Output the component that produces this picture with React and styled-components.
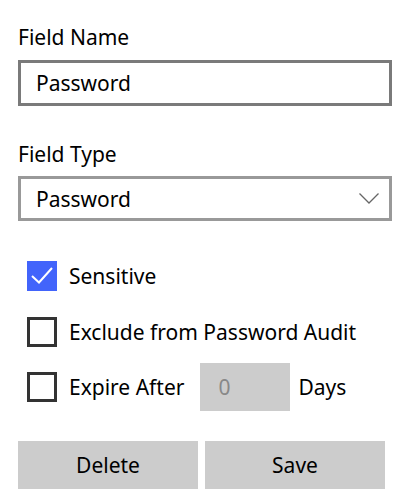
import React, { useState } from "react";
import styled, { createGlobalStyle } from "styled-components";

const GlobalStyle = createGlobalStyle`
  body {
    margin: 0;
    background: #ffffff;
    font-family: "Noto Sans", "Open Sans", sans-serif;
    color: #000000;
  }
`;

const Panel = styled.div`
  width: 374px;
  padding: 23px 8px 0 18px;
  display: flex;
  flex-direction: column;
  font-size: 21px;
`;

const Label = styled.label`
  line-height: 28px;
  height: 28px;
  margin-top: ${(p) => p.$top || 0}px;
`;

const TextBox = styled.input`
  box-sizing: border-box;
  width: 374px;
  height: 46px;
  margin-top: 9px;
  border: 3px solid #7a7a7a;
  padding: 0 15px;
  font-family: inherit;
  font-size: 21px;
  color: #000;
  outline: none;
  background: #fff;
`;

const SelectBox = styled.div`
  box-sizing: border-box;
  width: 374px;
  height: 45px;
  margin-top: 8px;
  border: 3px solid #999999;
  padding: 0 10px 0 15px;
  display: flex;
  align-items: center;
  justify-content: space-between;
`;

const CheckRow = styled.div`
  display: flex;
  align-items: center;
  height: ${(p) => p.$height || 30}px;
  margin-top: ${(p) => p.$top}px;
  padding-left: 9px;
  cursor: pointer;
`;

const Box = styled.span`
  box-sizing: border-box;
  width: 30px;
  height: 30px;
  flex: none;
  margin-right: 12px;
  display: flex;
  align-items: center;
  justify-content: center;
  background: ${(p) => (p.$checked ? "#4264fb" : "#ffffff")};
  border: ${(p) => (p.$checked ? "none" : "3px solid #333333")};
`;

const NumberBox = styled.div`
  box-sizing: border-box;
  width: 90px;
  height: 48px;
  margin-left: 16px;
  margin-right: 8px;
  padding-left: 18px;
  display: flex;
  align-items: center;
  background: #cccccc;
  color: #888888;
`;

const ButtonRow = styled.div`
  display: flex;
  gap: 7px;
  margin-top: 30px;
`;

const Button = styled.button`
  width: 180px;
  height: 48px;
  border: none;
  background: #cccccc;
  font-family: inherit;
  font-size: 21px;
  color: #000;
  padding: 0;
  cursor: pointer;
`;

const Check = () => (
  <svg width="26" height="20" viewBox="0 0 26 20">
    <path d="M3 10 L10 16.5 L23 2" fill="none" stroke="#ffffff" strokeWidth="2" />
  </svg>
);

const Chevron = () => (
  <svg width="20" height="11" viewBox="0 0 20 11">
    <path d="M0.5 0.5 L10 10 L19.5 0.5" fill="none" stroke="#666666" strokeWidth="1.3" />
  </svg>
);

export default function App() {
  const [checks, setChecks] = useState({ sensitive: true, exclude: false, expire: false });
  const toggle = (k) => setChecks({ ...checks, [k]: !checks[k] });

  return (
    <>
      <GlobalStyle />
      <Panel>
        <Label>Field Name</Label>
        <TextBox defaultValue="Password" />
        <Label $top={34}>Field Type</Label>
        <SelectBox>
          <span>Password</span>
          <Chevron />
        </SelectBox>
        <CheckRow $top={40} onClick={() => toggle("sensitive")}>
          <Box $checked={checks.sensitive}>{checks.sensitive && <Check />}</Box>
          Sensitive
        </CheckRow>
        <CheckRow $top={26} onClick={() => toggle("exclude")}>
          <Box $checked={checks.exclude}>{checks.exclude && <Check />}</Box>
          Exclude from Password Audit
        </CheckRow>
        <CheckRow $top={16} $height={48}>
          <Box $checked={checks.expire} onClick={() => toggle("expire")}>
            {checks.expire && <Check />}
          </Box>
          Expire After
          <NumberBox>0</NumberBox>
          Days
        </CheckRow>
        <ButtonRow>
          <Button>Delete</Button>
          <Button>Save</Button>
        </ButtonRow>
      </Panel>
    </>
  );
}
